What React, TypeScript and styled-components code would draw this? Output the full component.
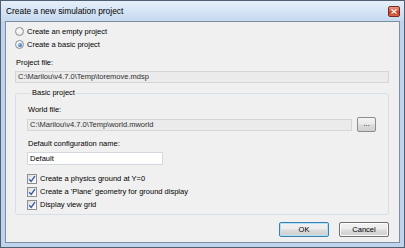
import React from "react";
import styled, { createGlobalStyle } from "styled-components";

const Global = createGlobalStyle`
  html, body { margin: 0; padding: 0; background: #ffffff; }
  body { font-family: "Liberation Sans", Arial, sans-serif; }
  * { box-sizing: border-box; }
`;

const Window = styled.div`
  width: 405px;
  height: 248px;
  border: 1px solid #4f6075;
  background: #bfd4ec;
  padding: 0 4px 4px 4px;
  display: flex;
  flex-direction: column;
`;

const TitleBar = styled.div`
  height: 20px;
  margin: 0 -4px;
  padding: 0 4px 0 5px;
  display: flex;
  align-items: center;
  justify-content: space-between;
  background: linear-gradient(180deg, #e6eff9 0%, #d3e2f3 60%, #c6d9ef 100%);
`;

const Title = styled.span`
  font-size: 8.4px;
  color: #000;
  line-height: 10px;
`;

const CloseBtn = styled.div`
  width: 12px;
  height: 11px;
  border: 1px solid #7a2a1e;
  border-radius: 2px;
  background: linear-gradient(180deg, #eb9a85 0%, #d8614a 45%, #c23c24 55%, #d8674a 100%);
  display: flex;
  align-items: center;
  justify-content: center;
`;

const Client = styled.div`
  flex: 1;
  border: 1px solid #7d8ea3;
  background: #f0f0f0;
  padding: 3px 10px 0 9px;
  display: flex;
  flex-direction: column;
  font-size: 7.5px;
  color: #000;
`;

const OptionRow = styled.div`
  height: 13px;
  display: flex;
  align-items: center;
  gap: 3px;
  line-height: 10px;
`;

const Radio = styled.span<{ $checked?: boolean }>`
  width: 9px;
  height: 9px;
  border-radius: 50%;
  border: 1px solid #8d9297;
  background: radial-gradient(circle at 40% 35%, #ffffff 0%, #e4e6e8 70%, #d2d4d6 100%);
  display: flex;
  align-items: center;
  justify-content: center;
  &::after {
    content: "";
    display: ${(p) => (p.$checked ? "block" : "none")};
    width: 4px;
    height: 4px;
    border-radius: 50%;
    background: radial-gradient(circle at 35% 35%, #9fc6ec 0%, #3c7bbf 60%, #20508a 100%);
  }
`;

const Label = styled.div<{ $top: number }>`
  margin-top: ${(p) => p.$top}px;
  line-height: 10px;
  height: 10px;
  padding-left: 1px;
`;

const Field = styled.div<{ $readonly?: boolean; $top?: number; $width?: string; $grow?: boolean }>`
  margin-top: ${(p) => p.$top ?? 0}px;
  height: ${(p) => (p.$readonly ? "12px" : "13px")};
  width: ${(p) => p.$width ?? "auto"};
  flex: ${(p) => (p.$grow ? "1 1 auto" : "none")};
  min-width: 0;
  border: 1px solid ${(p) => (p.$readonly ? "#d6d6d6" : "#d3d8de")};
  background: ${(p) => (p.$readonly ? "#ebebeb" : "#ffffff")};
  color: ${(p) => (p.$readonly ? "#2e2e2e" : "#000")};
  padding: 0 2px;
  display: flex;
  align-items: center;
  line-height: 10px;
  white-space: nowrap;
  overflow: hidden;
`;

const Group = styled.fieldset`
  margin: 5px 0 0 0;
  padding: 7px 12px 3px 11px;
  border: 1px solid #d5dfe5;
  border-radius: 3px;
  display: flex;
  flex-direction: column;
  min-width: 0;
`;

const Legend = styled.legend`
  padding: 0 1px;
  margin-left: 4px;
  line-height: 10px;
  font-size: 7.5px;
`;

const FileRow = styled.div`
  margin-top: 2px;
  height: 15px;
  display: flex;
  align-items: center;
  gap: 5px;
`;

const SmallButton = styled.div`
  width: 19px;
  height: 15px;
  flex: none;
  border: 1px solid #8c8c8c;
  border-radius: 2px;
  background: linear-gradient(180deg, #f4f4f4 0%, #e9e9e9 48%, #dcdcdc 52%, #d0d0d0 100%);
  display: flex;
  align-items: center;
  justify-content: center;
  font-size: 7px;
  line-height: 7px;
  padding-bottom: 2px;
`;

const Checks = styled.div`
  margin-top: 7px;
  display: flex;
  flex-direction: column;
`;

const CheckBox = styled.span`
  width: 10px;
  height: 10px;
  border: 1px solid #8e8f8f;
  background: linear-gradient(135deg, #dcdcdc 0%, #f4f4f4 60%, #ffffff 100%);
  display: flex;
  align-items: center;
  justify-content: center;
`;

const ButtonBar = styled.div`
  margin-top: 7px;
  display: flex;
  justify-content: flex-end;
  gap: 10px;
`;

const DialogButton = styled.div<{ $default?: boolean }>`
  width: 50px;
  height: 15px;
  border: 1px solid ${(p) => (p.$default ? "#3c7fb1" : "#707070")};
  border-radius: 2px;
  background: linear-gradient(180deg, #f2f2f2 0%, #ebebeb 48%, #dddddd 52%, #cfcfcf 100%);
  box-shadow: ${(p) => (p.$default ? "inset 0 0 0 1px #aee3f7" : "inset 0 0 0 1px #fcfcfc")};
  display: flex;
  align-items: center;
  justify-content: center;
  line-height: 10px;
  font-size: 7.5px;
  color: #000;
`;

const Check = () => (
  <svg width="8" height="8" viewBox="0 0 8 8">
    <path d="M1.2 4.2 L3.2 6.4 L6.9 1.2" fill="none" stroke="#3d58a6" strokeWidth="1.4" />
  </svg>
);

const CloseGlyph = () => (
  <svg width="6" height="5" viewBox="0 0 6 5">
    <path d="M0.5 0.5 L5.5 4.5 M5.5 0.5 L0.5 4.5" stroke="#ffffff" strokeWidth="1.2" />
  </svg>
);

export default function App() {
  return (
    <>
      <Global />
      <Window>
        <TitleBar>
          <Title>Create a new simulation project</Title>
          <CloseBtn>
            <CloseGlyph />
          </CloseBtn>
        </TitleBar>
        <Client>
          <OptionRow>
            <Radio />
            <span>Create an empty project</span>
          </OptionRow>
          <OptionRow>
            <Radio $checked />
            <span>Create a basic project</span>
          </OptionRow>
          <Label $top={7}>Project file:</Label>
          <Field $readonly $top={3}>C:\Marilou\v4.7.0\Temp\toremove.mdsp</Field>
          <Group>
            <Legend>Basic project</Legend>
            <Label $top={0}>World file:</Label>
            <FileRow>
              <Field $readonly $grow>C:\Marilou\v4.7.0\Temp\world.mworld</Field>
              <SmallButton>...</SmallButton>
            </FileRow>
            <Label $top={7}>Default configuration name:</Label>
            <Field $top={3} $width="136px">Default</Field>
            <Checks>
              <OptionRow>
                <CheckBox>
                  <Check />
                </CheckBox>
                <span>Create a physics ground at Y=0</span>
              </OptionRow>
              <OptionRow>
                <CheckBox>
                  <Check />
                </CheckBox>
                <span>Create a 'Plane' geometry for ground display</span>
              </OptionRow>
              <OptionRow>
                <CheckBox>
                  <Check />
                </CheckBox>
                <span>Display view grid</span>
              </OptionRow>
            </Checks>
          </Group>
          <ButtonBar>
            <DialogButton $default>OK</DialogButton>
            <DialogButton>Cancel</DialogButton>
          </ButtonBar>
        </Client>
      </Window>
    </>
  );
}
